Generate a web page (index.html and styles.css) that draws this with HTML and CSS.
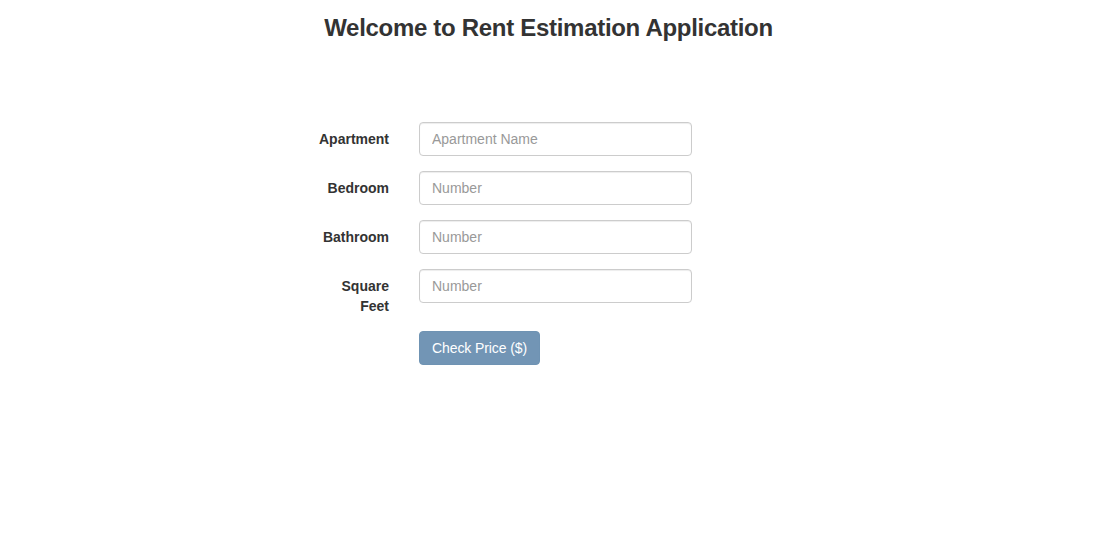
FILE: index.html
```html
<!DOCTYPE html>
<html lang="en">
<head>
<meta charset="utf-8">
<title>Rent Estimation</title>
<link rel="stylesheet" href="styles.css">
</head>
<body>
  <h3 class="title">Welcome to Rent Estimation Application</h3>
  <form class="form">
    <div class="group">
      <label class="label" for="apt">Apartment</label>
      <div class="field"><input class="input" id="apt" type="text" placeholder="Apartment Name"></div>
    </div>
    <div class="group">
      <label class="label" for="bed">Bedroom</label>
      <div class="field"><input class="input" id="bed" type="text" placeholder="Number"></div>
    </div>
    <div class="group">
      <label class="label" for="bath">Bathroom</label>
      <div class="field"><input class="input" id="bath" type="text" placeholder="Number"></div>
    </div>
    <div class="group">
      <label class="label" for="sq">Square Feet</label>
      <div class="field"><input class="input" id="sq" type="text" placeholder="Number"></div>
    </div>
    <div class="group">
      <div class="label"></div>
      <div class="field"><button class="btn" type="button" disabled>Check Price ($)</button></div>
    </div>
  </form>
</body>
</html>
```

FILE: styles.css
```css
* { box-sizing: border-box; }
html, body { margin: 0; padding: 0; background: #fff; }
body {
  font-family: "Liberation Sans", Arial, Helvetica, sans-serif;
  font-size: 14px;
  line-height: 20px;
  color: #333;
}
.title {
  margin: 15px 0 0 0;
  padding-right: 17px;
  text-align: center;
  font-size: 24px;
  font-weight: bold;
  letter-spacing: -0.3px;
  line-height: 26px;
  color: #333;
}
.form {
  margin: 81px 0 0 303px;
  width: 404px;
}
.group {
  display: flex;
  margin-bottom: 15px;
}
.label {
  width: 101px;
  flex: none;
  padding: 7px 15px 0 15px;
  text-align: right;
  font-weight: bold;
  line-height: 20px;
}
.field {
  flex: 1;
  padding: 0 15px;
}
.input {
  display: block;
  width: 100%;
  height: 34px;
  padding: 6px 12px;
  border: 1px solid #ccc;
  border-radius: 4px;
  font-family: inherit;
  font-size: 14px;
  line-height: 20px;
  color: #555;
  background: #fff;
  box-shadow: inset 0 1px 1px rgba(0,0,0,.075);
}
.input::placeholder { color: #999; }
.btn {
  display: inline-block;
  height: 34px;
  padding: 6px 12px;
  border: 1px solid #6f93b3;
  border-radius: 4px;
  background: #7295b5;
  color: #fff;
  font-family: inherit;
  font-size: 14px;
  line-height: 20px;
  font-weight: normal;
  letter-spacing: -0.1px;
}
```
